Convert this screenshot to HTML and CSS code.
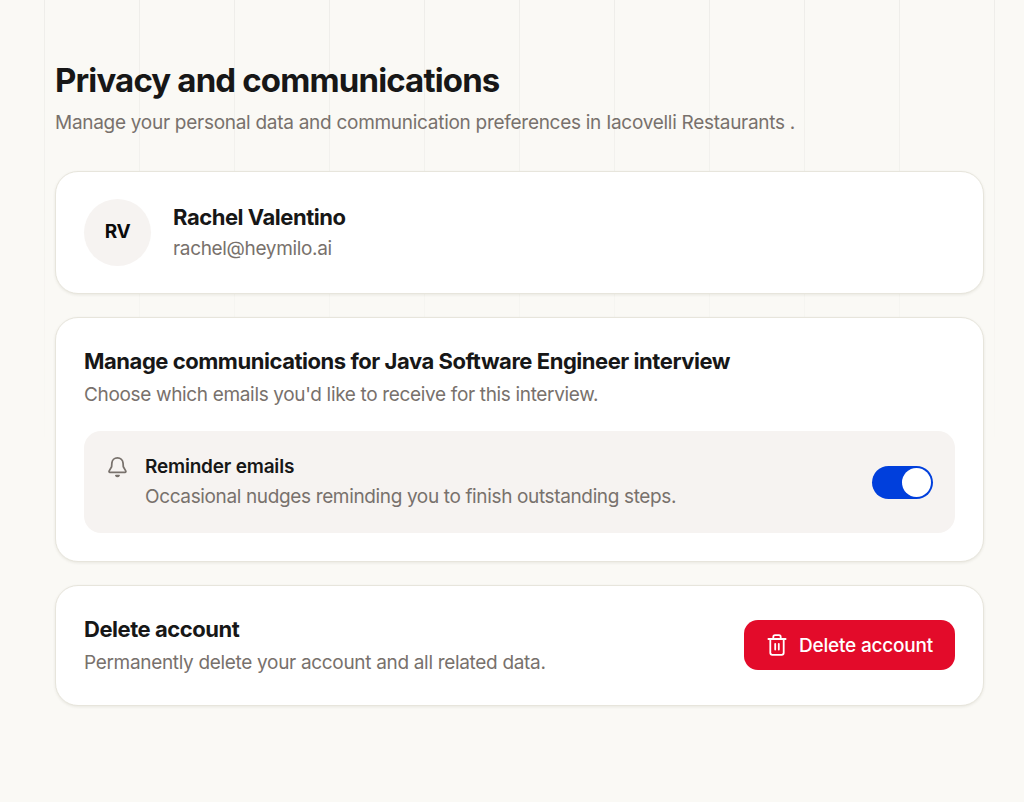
FILE: index.html
```html
<!DOCTYPE html>
<html lang="en">
<head>
  <meta charset="UTF-8" />
  <meta name="viewport" content="width=device-width, initial-scale=1.0"/>
  <title>Privacy and communications</title>
  <link rel="stylesheet" href="styles.css">
</head>
<body>
  <div class="lines"></div>

  <main>
    <header>
      <h1>Privacy and communications</h1>
      <p class="intro">Manage your personal data and communication preferences in Iacovelli Restaurants .</p>
    </header>

    <!-- Profile -->
    <section class="card profile">
      <div class="avatar">RV</div>
      <div>
        <h2 class="name">Rachel Valentino</h2>
        <p class="email">rachel@heymilo.ai</p>
      </div>
    </section>

    <!-- Communications -->
    <section class="card communications">
      <h2 class="comm-title">Manage communications for Java Software Engineer interview</h2>
      <p class="comm-text">Choose which emails you'd like to receive for this interview.</p>
      <div class="option">
        <svg class="bell" viewBox="0 0 24 24" fill="none" stroke="currentColor" stroke-width="1.9" stroke-linecap="round" stroke-linejoin="round">
          <path d="M12.5 2C9.1 2 6.6 4.5 6.4 7.8L6.1 11.8L3.5 16.2C3 17.2 3.4 17.8 4.3 17.8H20.7C21.6 17.8 22 17.2 21.5 16.2L18.9 11.8L18.6 7.8C18.4 4.5 15.9 2 12.5 2Z"/>
          <path d="M10.8 21.3C11.6 22.5 13.4 22.5 14.2 21.3Z" fill="currentColor"/>
        </svg>
        <div class="option-body">
          <h3>Reminder emails</h3>
          <p class="option-text">Occasional nudges reminding you to finish outstanding steps.</p>
        </div>
        <button class="switch" role="switch" aria-checked="true" aria-label="Reminder emails"><span class="knob"></span></button>
      </div>
    </section>

    <!-- Delete -->
    <section class="card delete">
      <div>
        <h2 class="delete-title">Delete account</h2>
        <p class="delete-text">Permanently delete your account and all related data.</p>
      </div>
      <button class="delete-btn">
        <svg viewBox="0 0 20 22" fill="none" stroke="currentColor" stroke-width="1.8" stroke-linecap="round" stroke-linejoin="round">
          <path d="M1.4 5H18.6M6.3 4.8V3Q6.3 1.2 8 1.2H12Q13.7 1.2 13.7 3V4.8M3.3 5V18.8Q3.3 20.8 5.3 20.8H14.7Q16.7 20.8 16.7 18.8V5M8.2 9.8V15.6M11.8 9.8V15.6"/>
        </svg>
        <span>Delete account</span>
      </button>
    </section>
  </main>
</body>
</html>
```
FILE: styles.css
```css
* {
  box-sizing: border-box;
}
body {
  font-family: Inter, 'Liberation Sans', sans-serif;
  margin: 0;
  min-height: 802px;
  background: #faf9f5;
  color: #171717;
}
h1, h2, h3, p {
  margin: 0;
}
p {
  font-size: 19px;
  line-height: 28px;
  letter-spacing: -0.34px;
  color: #78716c;
  white-space: nowrap;
}
h2 {
  font-size: 22px;
  line-height: 30px;
  font-weight: 700;
  letter-spacing: -0.46px;
  white-space: nowrap;
}

/* vertical guides fading out down the page */
.lines {
  position: absolute;
  top: 0;
  left: 44px;
  width: 951px;
  height: 450px;
  background: repeating-linear-gradient(to right, #eeede9 0 1px, transparent 1px 95px);
  mask-image: linear-gradient(to bottom, #000, transparent);
}
main {
  position: relative;
  padding: 60px 40px 0 55px;
}
header {
  height: 111px;
}
h1 {
  font-size: 33px;
  line-height: 40px;
  font-weight: 700;
  letter-spacing: -0.85px;
  white-space: nowrap;
}
.intro {
  margin-top: 9px;
  letter-spacing: -0.28px;
}
.card {
  background: #fff;
  border: 1px solid #e7e5dc;
  border-radius: 23px;
  padding: 0 28px;
  margin-bottom: 23px;
  box-shadow: 0 1px 3px rgba(60, 50, 20, 0.09);
}
.profile {
  display: flex;
  align-items: center;
  gap: 22px;
  height: 123px;
}
.avatar {
  display: flex;
  align-items: center;
  justify-content: center;
  width: 67px;
  height: 67px;
  padding-bottom: 2px;
  border-radius: 50%;
  background: #f6f3f1;
  color: #0a0a0a;
  font-size: 19px;
  font-weight: 700;
  letter-spacing: -0.3px;
}
.email {
  margin-top: 3px;
}
.communications {
  height: 245px;
  padding-top: 28px;
}
.comm-text {
  margin-top: 5px;
}
.option {
  display: flex;
  align-items: flex-start;
  height: 102px;
  margin-top: 22px;
  padding: 21px 22px 19px;
  border-radius: 17px;
  background: #f6f3f1;
}
.bell {
  width: 22px;
  height: 22px;
  margin-top: 4px;
  color: #78716c;
}
.option-body {
  flex: 1;
  margin-left: 17px;
}
h3 {
  font-size: 19px;
  line-height: 30px;
  font-weight: 600;
  letter-spacing: -0.2px;
}
.option-text {
  margin-top: 1px;
  letter-spacing: -0.36px;
}
.switch {
  display: flex;
  justify-content: flex-end;
  align-self: center;
  width: 61px;
  height: 33px;
  margin-top: -2px;
  padding: 2px;
  border: 0;
  border-radius: 17px;
  background: #003fdc;
}
.knob {
  width: 29px;
  height: 29px;
  border-radius: 50%;
  background: #fff;
}
.delete {
  display: flex;
  align-items: center;
  justify-content: space-between;
  height: 121px;
  padding-bottom: 1px;
}
.delete-text {
  margin-top: 5px;
  letter-spacing: -0.32px;
}
.delete-btn {
  display: flex;
  align-items: center;
  gap: 12px;
  width: 211px;
  height: 50px;
  padding: 0 0 0 23px;
  border: 0;
  border-radius: 14px;
  background: #e30b2a;
  color: #fff;
  font: 500 19px Inter, 'Liberation Sans', sans-serif;
  letter-spacing: -0.2px;
  white-space: nowrap;
}
.delete-btn svg {
  width: 20px;
  height: 22px;
  flex: none;
}
```
